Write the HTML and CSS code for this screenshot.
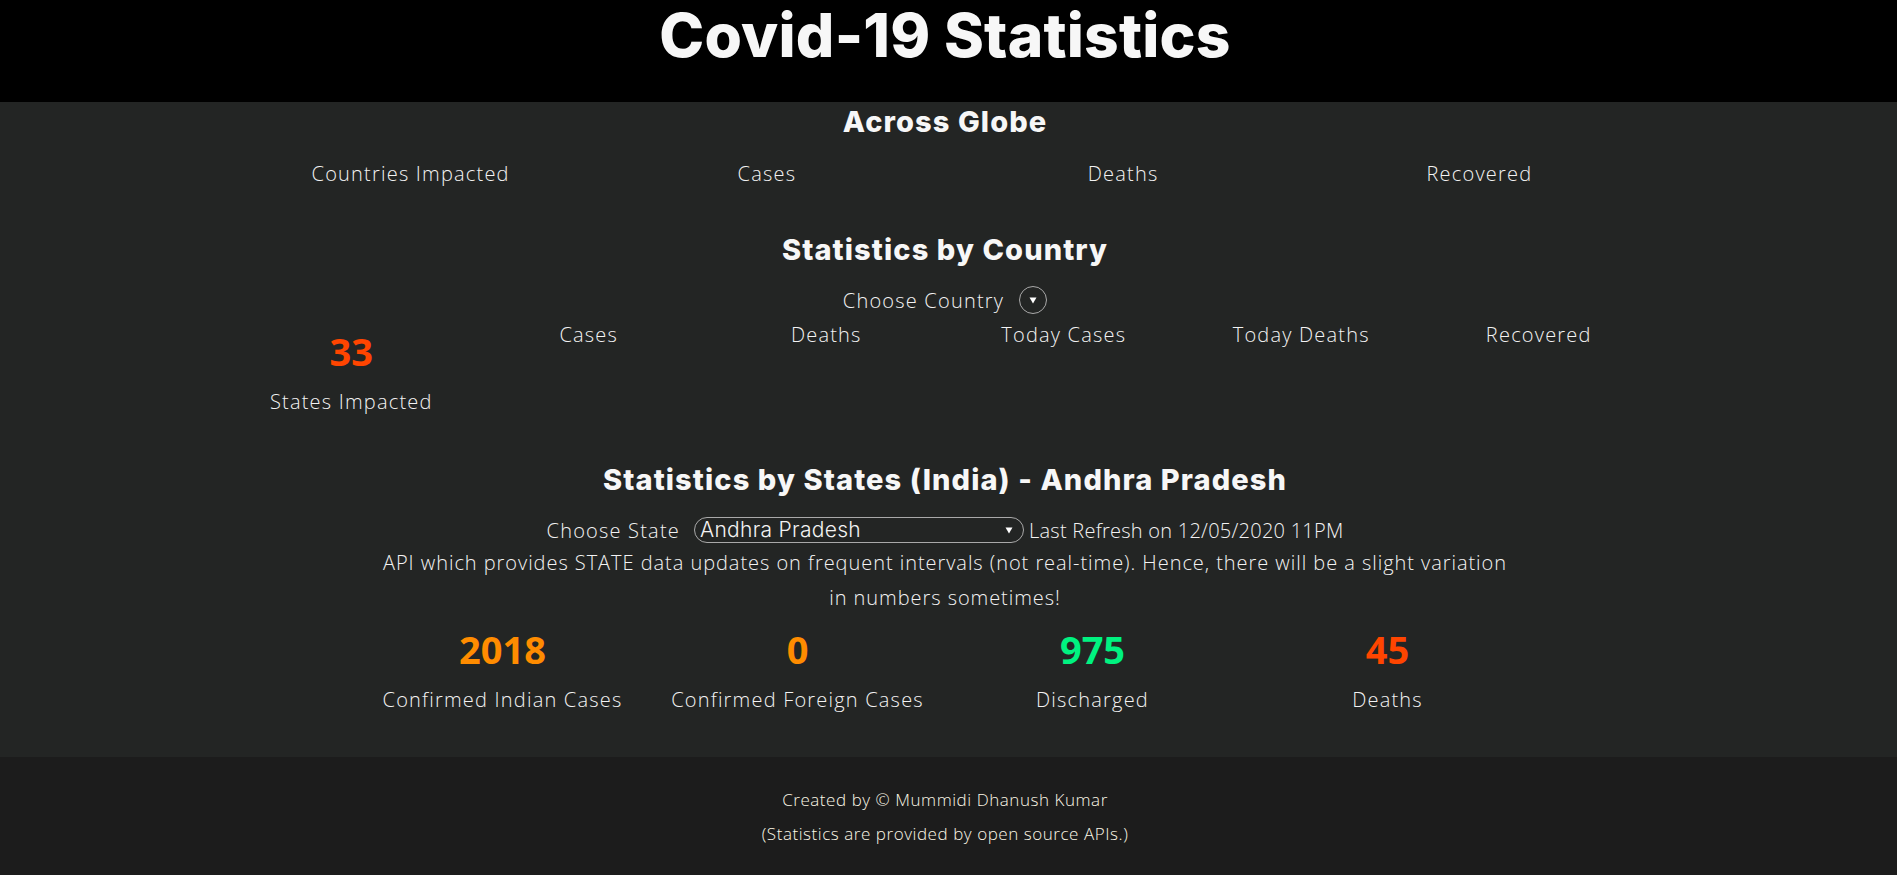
FILE: index.html
```html
<!DOCTYPE html>
<html lang="en">
<head>
<meta charset="utf-8">
<title>Covid-19 Statistics</title>
<link rel="stylesheet" href="styles.css">
</head>
<body>
<header class="top">
  <h1 class="title">Covid-19 Statistics</h1>
</header>
<main class="main">
  <section class="block">
    <h2 class="heading heading-first">Across Globe</h2>
    <div class="stats stats-globe">
      <div class="stat"><p class="label">Countries Impacted</p></div>
      <div class="stat"><p class="label">Cases</p></div>
      <div class="stat"><p class="label">Deaths</p></div>
      <div class="stat"><p class="label">Recovered</p></div>
    </div>
  </section>

  <section class="block">
    <h2 class="heading heading-country">Statistics by Country</h2>
    <div class="chooser chooser-country">
      <label class="chooser-label" for="country">Choose Country</label>
      <span class="select-wrap select-round">
        <select id="country" class="select"></select>
        <svg class="caret" width="8" height="7" viewBox="0 0 8 7"><path d="M0.5 0.5 H7.5 L4 6.5 Z" fill="#fff"/></svg>
      </span>
    </div>
    <div class="stats stats-country">
      <div class="stat">
        <div class="num num-red">33</div>
        <p class="label label-after-num">States Impacted</p>
      </div>
      <div class="stat"><p class="label label-only">Cases</p></div>
      <div class="stat"><p class="label label-only">Deaths</p></div>
      <div class="stat"><p class="label label-only">Today Cases</p></div>
      <div class="stat"><p class="label label-only">Today Deaths</p></div>
      <div class="stat"><p class="label label-only">Recovered</p></div>
    </div>
  </section>

  <section class="block">
    <h2 class="heading heading-states">Statistics by States (India) - Andhra Pradesh</h2>
    <div class="chooser chooser-state">
      <label class="chooser-label" for="state">Choose State</label>
      <span class="select-wrap select-wide">
        <select id="state" class="select select-text">
          <option>Andhra Pradesh</option>
        </select>
        <svg class="caret caret-wide" width="8" height="7" viewBox="0 0 8 7"><path d="M0.5 0.5 H7.5 L4 6.5 Z" fill="#fff"/></svg>
      </span>
      <span class="refresh">Last Refresh on 12/05/2020 11PM</span>
    </div>
    <p class="note">API which provides STATE data updates on frequent intervals (not real-time). Hence, there will be a slight variation<br>in numbers sometimes!</p>
    <div class="stats stats-state">
      <div class="stat">
        <div class="num num-orange">2018</div>
        <p class="label label-after-num">Confirmed Indian Cases</p>
      </div>
      <div class="stat">
        <div class="num num-orange">0</div>
        <p class="label label-after-num">Confirmed Foreign Cases</p>
      </div>
      <div class="stat">
        <div class="num num-green">975</div>
        <p class="label label-after-num">Discharged</p>
      </div>
      <div class="stat">
        <div class="num num-red">45</div>
        <p class="label label-after-num">Deaths</p>
      </div>
    </div>
  </section>
</main>
<footer class="foot">
  <p class="foot-line">Created by © Mummidi Dhanush Kumar</p>
  <p class="foot-line">(Statistics are provided by open source APIs.)</p>
</footer>
</body>
</html>
```

FILE: styles.css
```css
html, body {
  margin: 0;
  padding: 0;
}

body {
  background: #232524;
  color: #f3f3f3;
  font-family: "Open Sans", "Liberation Sans", sans-serif;
  font-weight: 300;
}

.top {
  background: #000;
  height: 102px;
  padding-right: 7px;
}

.title {
  margin: 0;
  text-align: center;
  font-family: Inter, "Liberation Sans", sans-serif;
  font-weight: 800;
  font-size: 60.5px;
  line-height: 70px;
  color: #f7f7f7;
  letter-spacing: 0.2px;
}

.main {
  background: #232524;
  padding: 0 7px 44px 0;
  overflow: hidden;
}

.block {
  display: flex;
  flex-direction: column;
  align-items: center;
}

.heading {
  margin: 0;
  font-family: Inter, "Liberation Sans", sans-serif;
  font-weight: 800;
  font-size: 29px;
  line-height: 36px;
  letter-spacing: 1.1px;
  color: #f7f7f7;
  text-align: center;
}

.heading-first { margin-top: 2px; }
.heading-country { margin-top: 45px; }
.heading-states { margin-top: 47px; }

.stats {
  display: flex;
  align-items: flex-start;
}

.stats-globe {
  width: 1425px;
  margin-top: 20px;
}

.stats-country {
  width: 1425px;
}

.stats-state {
  width: 1180px;
  margin-top: 12px;
}

.stat {
  flex: 1 1 0;
  display: flex;
  flex-direction: column;
  align-items: center;
  text-align: center;
}

.label {
  margin: 0;
  font-size: 20px;
  line-height: 27px;
  letter-spacing: 1.2px;
  white-space: nowrap;
}

.label-only { margin-top: 7px; }
.label-after-num { margin-top: 15px; }

.num {
  font-family: "Open Sans", "Liberation Sans", sans-serif;
  font-weight: 700;
  font-size: 38px;
  line-height: 44px;
}

.stats-country .num { margin-top: 15px; }

.num-red { color: #ff4500; }
.num-orange { color: #ff8c00; }
.num-green { color: #00f280; }

.chooser {
  display: flex;
  align-items: center;
  font-size: 20px;
  letter-spacing: 1.2px;
}

.chooser-country {
  margin-top: 18px;
  height: 28px;
  gap: 15px;
}

.chooser-state {
  margin-top: 19px;
  height: 26px;
}

.chooser-label {
  line-height: 27px;
}

.chooser-state .chooser-label { margin-right: 14px; }

.select-wrap {
  position: relative;
  display: inline-block;
}

.select {
  -webkit-appearance: none;
  appearance: none;
  background: transparent;
  border: 1px solid #a9a9a9;
  color: #f3f3f3;
  margin: 0;
  outline: none;
  display: block;
  box-sizing: border-box;
}

.select-round .select {
  width: 28px;
  height: 28px;
  border-radius: 50%;
  padding: 0;
}

.select-wide .select {
  width: 330px;
  height: 26px;
  border-radius: 13px;
  padding: 0 20px 0 5px;
  font-family: Inter, "Liberation Sans", sans-serif;
  font-weight: 300;
  font-size: 21px;
  line-height: 24px;
  letter-spacing: 0.3px;
}

.caret {
  position: absolute;
  pointer-events: none;
}

.select-round .caret {
  left: 10px;
  top: 11px;
}

.caret-wide {
  right: 11px;
  top: 10px;
}

.refresh {
  margin-left: 5px;
  line-height: 27px;
  letter-spacing: 0.25px;
}

.note {
  margin: 2px 0 0;
  font-size: 20px;
  line-height: 35px;
  letter-spacing: 0.95px;
  text-align: center;
}

.foot {
  background: #1c1c1c;
  padding: 26px 7px 24px 0;
  text-align: center;
}

.foot-line {
  margin: 0;
  font-size: 17px;
  line-height: 34px;
  letter-spacing: 0.55px;
  color: #fbf7e6;
}
```
